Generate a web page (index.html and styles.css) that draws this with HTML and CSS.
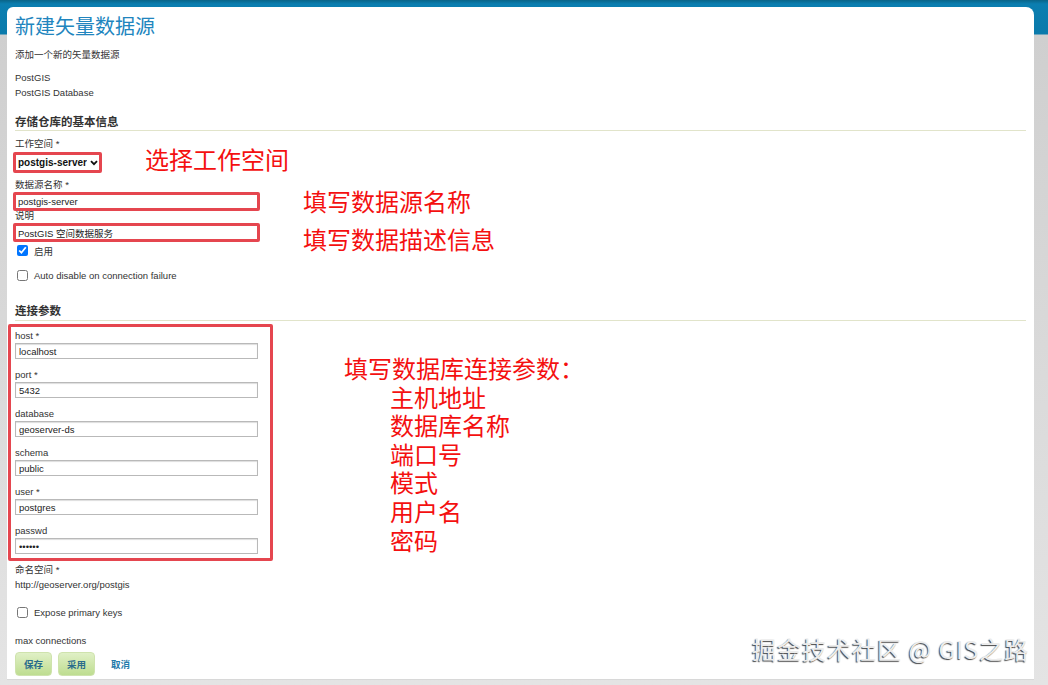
FILE: index.html
```html
<!DOCTYPE html>
<html lang="zh-CN">
<head>
    <meta charset="UTF-8">
    <title>新建矢量数据源</title>
    <link rel="stylesheet" href="styles.css">
</head>
<body>
    <div class="page">
        <div class="card">
            <h1 class="title">新建矢量数据源</h1>
            <div class="subtitle">添加一个新的矢量数据源</div>
            <div class="store-type">
                <div>PostGIS</div>
                <div>PostGIS Database</div>
            </div>

            <h2 class="section">存储仓库的基本信息</h2>
            <div class="label first">工作空间 *</div>
            <div class="mark select-mark">
                <select class="ws-select"><option>postgis-server</option></select>
                <svg class="chevron" width="8" height="6" viewBox="0 0 8 6">
                    <path d="M1 1.2 L4 4.2 L7 1.2" fill="none" stroke="#111" stroke-width="1.8"/>
                </svg>
            </div>
            <div class="label">数据源名称 *</div>
            <div class="mark input-mark">
                <input class="plain" type="text" value="postgis-server">
            </div>
            <div class="label tight">说明</div>
            <div class="mark input-mark">
                <input class="plain" type="text" value="PostGIS 空间数据服务">
            </div>
            <label class="check first-check"><input type="checkbox" checked> 启用</label>
            <label class="check second-check"><input type="checkbox"> Auto disable on connection failure</label>

            <h2 class="section conn">连接参数</h2>
            <div class="params">
                <div class="field">
                    <div class="label">host *</div>
                    <input class="box" type="text" value="localhost">
                </div>
                <div class="field">
                    <div class="label">port *</div>
                    <input class="box" type="text" value="5432">
                </div>
                <div class="field">
                    <div class="label">database</div>
                    <input class="box" type="text" value="geoserver-ds">
                </div>
                <div class="field">
                    <div class="label">schema</div>
                    <input class="box" type="text" value="public">
                </div>
                <div class="field">
                    <div class="label">user *</div>
                    <input class="box" type="text" value="postgres">
                </div>
                <div class="field">
                    <div class="label">passwd</div>
                    <input class="box" type="password" value="123456">
                </div>
            </div>

            <div class="label ns">命名空间 *</div>
            <div class="label">http://geoserver.org/postgis</div>
            <label class="check pk"><input type="checkbox"> Expose primary keys</label>
            <div class="label maxc">max connections</div>

            <div class="actions">
                <button class="btn">保存</button>
                <button class="btn">采用</button>
                <a class="cancel" href="#">取消</a>
            </div>

            <div class="note note-ws">选择工作空间</div>
            <div class="note note-name">填写数据源名称</div>
            <div class="note note-desc">填写数据描述信息</div>
            <div class="note note-conn">
                <div>填写数据库连接参数：</div>
                <div class="sub">主机地址</div>
                <div class="sub">数据库名称</div>
                <div class="sub">端口号</div>
                <div class="sub">模式</div>
                <div class="sub">用户名</div>
                <div class="sub">密码</div>
            </div>

            <div class="watermark">掘金技术社区 @ GIS之路</div>
        </div>
    </div>
</body>
</html>
```

FILE: styles.css
```css
body {
    margin: 0;
    height: 685px;
    overflow: hidden;
    font-family: "Liberation Sans", "Noto Sans CJK SC", sans-serif;
    font-size: 9.5px;
    color: #333;
    background: linear-gradient(to bottom, #0a6488 0, #0b7eb0 4px, #0a7aab 34px, #cfcfcf 35px, #e4e4e4 685px);
}
.page {
    padding: 7px 14px 0 7px;
}
.card {
    position: relative;
    background-color: white;
    border-radius: 6px 8px 0 0;
    height: 673px;
    padding: 6px 8px 0 8px;
    box-sizing: border-box;
    border-bottom: 1px solid #d8d8d8;
}
.title {
    margin: 0;
    font-size: 20px;
    line-height: 28px;
    font-weight: normal;
    color: #2185be;
}
.subtitle {
    margin-top: 6px;
    line-height: 15px;
}
.store-type {
    margin-top: 8px;
    line-height: 15px;
}
.section {
    margin: 14px 0 0 0;
    font-size: 11.5px;
    line-height: 16px;
    font-weight: bold;
    color: #333;
    border-bottom: 1px solid #e1e4ca;
}
.section.conn {
    margin-top: 22px;
    line-height: 15px;
    padding-bottom: 1px;
}
.label {
    line-height: 15px;
}
.label.first {
    margin-top: 5px;
}
.label.tight {
    margin-top: -2px;
    line-height: 14px;
}
.mark {
    border: 3px solid #e5464f;
    border-radius: 2px;
    box-sizing: border-box;
    margin-left: -2px;
}
.select-mark {
    display: flex;
    align-items: center;
    margin-top: 1px;
    margin-bottom: 4px;
    height: 21px;
    width: 89px;
    padding-left: 2px;
}
.ws-select {
    appearance: none;
    -webkit-appearance: none;
    border: none;
    height: 15px;
    padding: 0;
    font-family: "Liberation Sans", sans-serif;
    font-size: 10px;
    font-weight: bold;
    color: #111;
    background: white;
    outline: none;
}
.chevron {
    margin-left: 3px;
}
.input-mark {
    width: 247px;
    height: 19px;
}
.plain {
    border: none;
    height: 13px;
    width: 238px;
    padding: 0 0 0 2px;
    font-family: "Liberation Sans", "Noto Sans CJK SC", sans-serif;
    font-size: 9.5px;
    color: #222;
    outline: none;
    background: white;
}
.check {
    display: flex;
    align-items: center;
    gap: 6px;
    height: 13px;
    margin-left: 2px;
}
.check input {
    margin: 0;
    width: 11px;
    height: 11px;
}
.first-check {
    margin-top: 2px;
}
.second-check {
    margin-top: 12px;
}
.params {
    margin: 3px 0 0 -7px;
    width: 265px;
    border: 3px solid #e5464f;
    border-radius: 2px;
    box-sizing: border-box;
    padding: 1px 0 4px 4px;
}
.field + .field {
    margin-top: 8px;
}
.box {
    display: block;
    width: 243px;
    height: 16px;
    box-sizing: border-box;
    border: 1px solid #b9b9b9;
    box-shadow: inset 0 1px 1px #ddd;
    padding: 0 3px;
    font-family: "Liberation Sans", sans-serif;
    font-size: 9.5px;
    color: #222;
    outline: none;
}
.label.ns {
    margin-top: 1px;
}
.pk {
    margin-top: 14px;
}
.label.maxc {
    margin-top: 14px;
}
.actions {
    display: flex;
    align-items: center;
    gap: 6px;
    margin-top: 4px;
}
.btn {
    width: 37px;
    height: 24px;
    border: 1px solid #cfe3ad;
    border-radius: 4px;
    background: linear-gradient(to bottom, #e0f0c6, #bedd90);
    font-family: "Noto Sans CJK SC", sans-serif;
    font-size: 9.5px;
    font-weight: bold;
    color: #2a6c8c;
    padding: 0;
}
.cancel {
    margin-left: 10px;
    font-family: "Noto Sans CJK SC", sans-serif;
    font-size: 9.5px;
    font-weight: bold;
    color: #1f7bab;
    text-decoration: none;
}
.note {
    position: absolute;
    font-family: "Noto Sans CJK SC", sans-serif;
    font-size: 24px;
    line-height: 24px;
    color: #f41010;
}
.note-ws {
    left: 138px;
    top: 140px;
}
.note-name {
    left: 296px;
    top: 182px;
}
.note-desc {
    left: 296px;
    top: 220px;
}
.note-conn {
    left: 337px;
    top: 347px;
    line-height: 28.6px;
}
.note-conn .sub {
    padding-left: 46px;
}
.watermark {
    position: absolute;
    left: 745px;
    top: 628px;
    font-family: "Noto Sans CJK SC", sans-serif;
    font-size: 24px;
    line-height: 28px;
    letter-spacing: 1px;
    color: #ececec;
    text-shadow: -1px 1px 1px #444;
}
```
